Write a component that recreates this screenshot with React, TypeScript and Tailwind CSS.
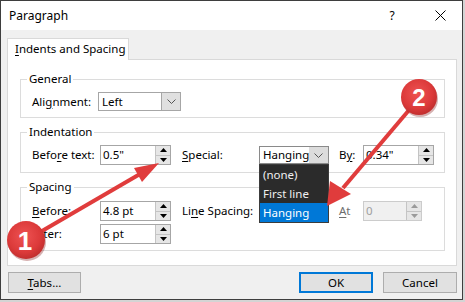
import React from "react";

const U = ({ children }: { children: React.ReactNode }) => (
  <span className="underline underline-offset-[2px] decoration-1">{children}</span>
);

function Chevron({ color = "#555555" }: { color?: string }) {
  return (
    <svg width="9" height="5" viewBox="0 0 9 5">
      <path d="M0.5 0.5 L4.5 4.5 L8.5 0.5" fill="none" stroke={color} strokeWidth="1" />
    </svg>
  );
}

function SpinArrows({ disabled }: { disabled?: boolean }) {
  const c = disabled ? "#9a9a9a" : "#000000";
  return (
    <div className="flex flex-col w-[15px] self-stretch border-l border-[#c4c4c4] bg-[#e6e6e6]">
      <div className="flex-1 flex items-center justify-center border-b border-[#c4c4c4]">
        <svg width="7" height="4" viewBox="0 0 7 4">
          <path d="M0 4 L3.5 0 L7 4Z" fill={c} />
        </svg>
      </div>
      <div className="flex-1 flex items-center justify-center">
        <svg width="7" height="4" viewBox="0 0 7 4">
          <path d="M0 0 L7 0 L3.5 4Z" fill={c} />
        </svg>
      </div>
    </div>
  );
}

function SpinBox({ value, className }: { value: string; className: string }) {
  return (
    <div className={`flex h-[20px] border border-[#a6a6a6] bg-white ${className}`}>
      <div className="flex-1 pl-[2px] leading-[18px]">{value}</div>
      <SpinArrows />
    </div>
  );
}

function DisabledSpinBox({ value, className }: { value: string; className: string }) {
  return (
    <div className={`flex h-[20px] border border-[#cccccc] bg-[#f0f0f0] text-[#a0a0a0] ${className}`}>
      <div className="flex-1 pl-[2px] leading-[18px]">{value}</div>
      <SpinArrows disabled />
    </div>
  );
}

function Label({ children, className }: { children: React.ReactNode; className: string }) {
  return <div className={`leading-[16px] ${className}`}>{children}</div>;
}

function Group({ title, children, className = "" }: { title: string; children: React.ReactNode; className?: string }) {
  return (
    <fieldset className={`border border-[#dcdcdc] pl-[6px] pr-[6px] ${className}`}>
      <legend className="px-[2px] leading-[16px]">{title}</legend>
      {children}
    </fieldset>
  );
}

export default function App() {
  return (
    <div className="w-[465px] h-[302px] bg-[#d4d4d4] relative overflow-hidden font-['Segoe_UI','Noto_Sans',sans-serif] text-[11.5px] text-black">
      <div className="w-[463px] h-[300px] border border-[#3e3e3e] bg-[#f0f0f0] flex flex-col">
        {/* Title bar */}
        <div className="h-[29px] bg-white flex items-center shrink-0">
          <div className="pl-[8px] text-[12px] flex-1">Paragraph</div>
          <div className="w-[20px] text-center text-[12px] mr-[32px]">?</div>
          <div className="w-[12px] flex items-center justify-center mr-[16px]">
            <svg width="11" height="11" viewBox="0 0 11 11">
              <path d="M0.5 0.5 L10.5 10.5 M10.5 0.5 L0.5 10.5" stroke="#000" strokeWidth="1" />
            </svg>
          </div>
        </div>

        {/* Body */}
        <div className="flex-1 flex flex-col pl-[6px] pr-[5px] pt-[8px]">
          {/* Tab */}
          <div className="flex">
            <div className="relative z-10 -mb-px h-[22px] w-[122px] border border-b-0 border-[#d9d9d9] bg-white pl-[7px] leading-[20px]">
              <U>I</U>ndents and Spacing
            </div>
          </div>
          {/* Panel */}
          <div className="border border-[#d9d9d9] bg-white pl-[12px] pr-[11px] pt-[11px] pb-[14px] flex flex-col">
            <Group title="General" className="pb-[6px]">
              <div className="flex items-center pl-[5px] pt-[5px]">
                <Label className="w-[66px]">
                  Ali<U>g</U>nment:
                </Label>
                <div className="flex h-[19px] w-[83px] border border-[#a6a6a6] bg-white">
                  <div className="flex-1 pl-[3px] leading-[17px]">Left</div>
                  <div className="w-[19px] bg-[#e0e0e0] border-l border-[#a6a6a6] flex items-center justify-center">
                    <Chevron />
                  </div>
                </div>
              </div>
            </Group>

            <Group title="Indentation" className="mt-[6px] pb-[7px]">
              <div className="flex items-center pl-[5px] pt-[5px]">
                <Label className="w-[68px]">
                  Befo<U>r</U>e text:
                </Label>
                <SpinBox value={'0.5"'} className="w-[71px]" />
                <Label className="ml-[11px] w-[77px]">
                  <U>S</U>pecial:
                </Label>
                <div className="relative w-[70px] h-[18px]">
                  <div className="flex h-[18px] border border-[#8a8a8a] bg-white">
                    <div className="flex-1 pl-[3px] leading-[16px]">Hanging</div>
                    <div className="w-[19px] bg-[#dcdcdc] flex items-center justify-center">
                      <Chevron />
                    </div>
                  </div>
                  <div className="absolute left-0 top-full z-20 w-[70px] bg-[#2b2b2b] border border-[#3c3c3c] text-[#f0f0f0] flex flex-col">
                    <div className="h-[19px] pl-[3px] leading-[19px]">(none)</div>
                    <div className="h-[19px] pl-[3px] leading-[19px]">First line</div>
                    <div className="h-[19px] pl-[3px] leading-[19px] bg-[#0078d7] text-white">Hanging</div>
                  </div>
                </div>
                <Label className="ml-[10px] w-[24px]">
                  B<U>y</U>:
                </Label>
                <SpinBox value={'0.34"'} className="w-[71px]" />
              </div>
            </Group>

            <Group title="Spacing" className="mt-[6px] pb-[6px]">
              <div className="flex flex-col pl-[5px] pt-[6px] gap-[3px]">
                <div className="flex items-center">
                  <Label className="w-[68px]">
                    <U>B</U>efore:
                  </Label>
                  <SpinBox value="4.8 pt" className="w-[71px]" />
                  <Label className="ml-[11px] w-[77px]">
                    Li<U>n</U>e Spacing:
                  </Label>
                  <div className="w-[70px]" />
                  <Label className="ml-[10px] w-[24px] text-[#6d6d6d]">
                    <U>A</U>t
                  </Label>
                  <DisabledSpinBox value="0" className="w-[59px]" />
                </div>
                <div className="flex items-center">
                  <Label className="w-[68px]">
                    A<U>f</U>ter:
                  </Label>
                  <SpinBox value="6 pt" className="w-[71px]" />
                </div>
              </div>
            </Group>
          </div>

          {/* Buttons */}
          <div className="flex items-center mt-[6px]">
            <button className="ml-[1px] w-[73px] h-[21px] bg-[#e1e1e1] border border-[#adadad] leading-[19px] text-center">
              <U>T</U>abs...
            </button>
            <div className="flex-1" />
            <button className="w-[74px] h-[21px] bg-[#e1e1e1] border-2 border-[#0078d7] leading-[17px] text-center">
              OK
            </button>
            <button className="ml-[10px] w-[74px] h-[21px] bg-[#e1e1e1] border border-[#adadad] leading-[19px] text-center">
              Cancel
            </button>
          </div>
        </div>
      </div>

      {/* Annotations */}
      <svg className="absolute inset-0 pointer-events-none z-30" width="465" height="302" viewBox="0 0 465 302">
        <defs>
          <radialGradient id="rg" cx="45%" cy="40%" r="60%">
            <stop offset="0%" stopColor="#ee5353" />
            <stop offset="70%" stopColor="#dc3a3a" />
            <stop offset="100%" stopColor="#c22f2f" />
          </radialGradient>
        </defs>
        {/* arrow 1 */}
        <line x1="30" y1="238" x2="140" y2="174" stroke="#e03c3c" strokeWidth="4" />
        <polygon points="159,163 142,182 134,168" fill="#e03c3c" />
        {/* arrow 2 */}
        <line x1="415" y1="103" x2="343" y2="188" stroke="#e03c3c" strokeWidth="4" />
        <polygon points="327,206 330,181 351,194" fill="#e03c3c" />
        {/* circles */}
        <circle cx="27" cy="242" r="19" fill="#8a1f1f" opacity="0.35" />
        <circle cx="26" cy="240" r="19" fill="url(#rg)" />
        <text x="25" y="250" textAnchor="middle" fill="#ffffff" fontFamily="'Liberation Sans', Arial, sans-serif" fontWeight="bold" fontSize="26">1</text>
        <circle cx="420" cy="99" r="18" fill="#8a1f1f" opacity="0.35" />
        <circle cx="419" cy="97" r="18" fill="url(#rg)" />
        <text x="419" y="106" textAnchor="middle" fill="#ffffff" fontFamily="'Liberation Sans', Arial, sans-serif" fontWeight="bold" fontSize="24">2</text>
      </svg>
    </div>
  );
}
